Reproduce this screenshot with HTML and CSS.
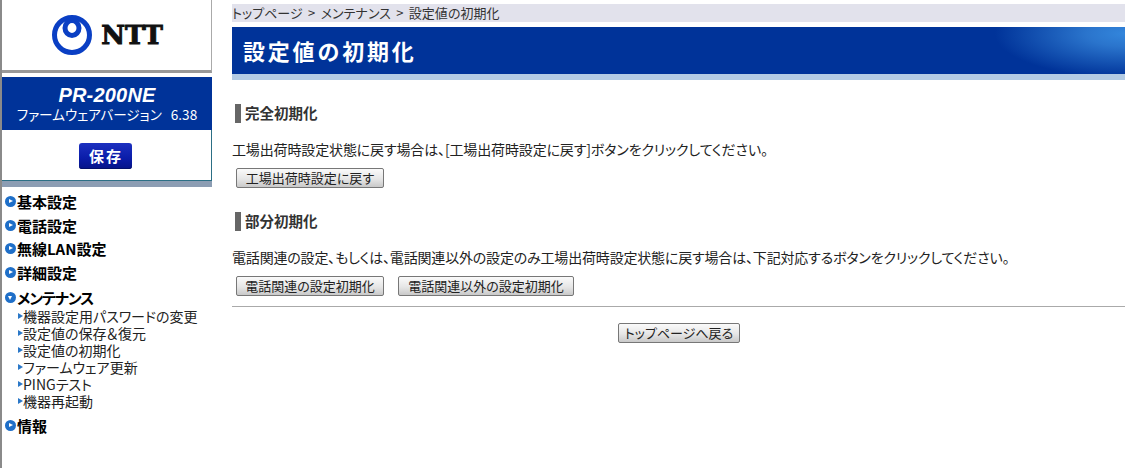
FILE: index.html
```html
<!DOCTYPE html>
<html lang="ja">
<head>
<meta charset="utf-8">
<title>設定値の初期化</title>
<link rel="stylesheet" href="styles.css">
</head>
<body>
<aside class="side">
  <div class="logo-box">
    <svg class="ntt-mark" width="42" height="40" viewBox="0 0 42 40"><circle cx="21" cy="20" r="17.500" fill="none" stroke="#0a3fc4" stroke-width="5"/><ellipse cx="21" cy="13" rx="7" ry="7.500" fill="none" stroke="#0a3fc4" stroke-width="5"/><path d="M16 4.800Q21 3.500 26 4.800" fill="none" stroke="#0a3fc4" stroke-width="3"/></svg>
    <span class="ntt-word">NTT</span>
  </div>
  <div class="device">
    <div class="device-name">PR-200NE</div>
    <div class="device-fw"><span>ファームウェアバージョン</span><span>6.38</span></div>
  </div>
  <div class="save-box"><button class="save" type="button">保存</button></div>
  <div class="save-band"></div>
  <nav class="nav">
    <a class="nav-top"><i class="dot"></i>基本設定</a>
    <a class="nav-top"><i class="dot"></i>電話設定</a>
    <a class="nav-top"><i class="dot"></i>無線LAN設定</a>
    <a class="nav-top"><i class="dot"></i>詳細設定</a>
    <a class="nav-top open"><i class="dot down"></i>メンテナンス</a>
    <ul class="sub">
      <li>機器設定用パスワードの変更</li>
      <li>設定値の保存＆復元</li>
      <li>設定値の初期化</li>
      <li>ファームウェア更新</li>
      <li>PINGテスト</li>
      <li>機器再起動</li>
    </ul>
    <a class="nav-top last"><i class="dot"></i>情報</a>
  </nav>
</aside>
<main class="main">
  <div class="crumb">トップページ &gt; メンテナンス &gt; 設定値の初期化</div>
  <h1 class="title">設定値の初期化</h1>
  <h2 class="sec first">完全初期化</h2>
  <p class="desc">工場出荷時設定状態に戻す場合は、[工場出荷時設定に戻す]ボタンをクリックしてください。</p>
  <div class="btns"><button class="btn b1" type="button">工場出荷時設定に戻す</button></div>
  <h2 class="sec second">部分初期化</h2>
  <p class="desc tight">電話関連の設定、もしくは、電話関連以外の設定のみ工場出荷時設定状態に戻す場合は、下記対応するボタンをクリックしてください。</p>
  <div class="btns"><button class="btn b1" type="button">電話関連の設定初期化</button><button class="btn b2" type="button">電話関連以外の設定初期化</button></div>
  <hr class="rule">
  <div class="back"><button class="btn b3" type="button">トップページへ戻る</button></div>
</main>
</body>
</html>
```
FILE: styles.css
```css
* { box-sizing: border-box; }
html, body { margin: 0; height: 100%; }
body {
  display: flex;
  background: #fff;
  color: #111;
  font-family: "Noto Sans CJK JP", "Liberation Sans", sans-serif;
  font-size: 13px;
  font-feature-settings: "palt";
  overflow: hidden;
}
.side {
  width: 212px;
  flex: none;
  border-left: 2px solid #8a8a8a;
  min-height: 468px;
}
.logo-box {
  height: 73px;
  border-right: 1px solid #aaa;
  border-bottom: 3px solid #999;
  display: flex;
  align-items: center;
  justify-content: center;
  gap: 8px;
  padding-left: 1px;
  margin-bottom: 4px;
}
.ntt-word {
  font-family: "DejaVu Serif", serif;
  font-weight: 700;
  font-size: 26px;
  color: #111;
  line-height: 1;
  font-feature-settings: normal;
  -webkit-text-stroke: 1px #111;
}
.device {
  height: 53px;
  background: #003399;
  color: #fff;
  text-align: center;
  padding-top: 7px;
}
.device-name {
  font-family: "Liberation Sans", sans-serif;
  font-style: italic;
  font-weight: 700;
  font-size: 20px;
  line-height: 22px;
  letter-spacing: 0.200px;
}
.device-fw {
  display: flex;
  justify-content: center;
  gap: 9px;
  font-size: 13.600px;
  line-height: 17px;
  font-weight: 400;
}
.save-box {
  height: 51px;
  border-right: 1px solid #2c6f85;
  border-bottom: 1px solid #2c6f85;
  display: flex;
  align-items: center;
  justify-content: center;
  padding-top: 1px;
  padding-right: 2px;
}
.save {
  width: 53px;
  height: 26px;
  border: 0;
  border-radius: 3px;
  padding: 0 0 0 1px;
  background: linear-gradient(#1c30c0, #0a1ca8 60%, #061488);
  box-shadow: inset 0 -1px 0 #04106a;
  color: #fff;
  font: 700 15px "Noto Sans CJK JP", sans-serif;
  letter-spacing: 2px;
}
.save-band { height: 6px; background: #8c9db3; }
.nav { padding: 3px 0 0 3px; }
.nav-top {
  display: flex;
  align-items: center;
  height: 23.500px;
  font-weight: 700;
  font-size: 15px;
  color: #000;
}
.nav-top.open { margin-top: 1.500px; letter-spacing: -1px; }
.dot {
  width: 11px;
  height: 11px;
  margin-right: 1px;
  border-radius: 50%;
  background: #1f6fc8;
  position: relative;
  flex: none;
}
.dot::after {
  content: "";
  position: absolute;
  left: 4px;
  top: 3px;
  border-left: 4px solid #fff;
  border-top: 2.500px solid transparent;
  border-bottom: 2.500px solid transparent;
}
.dot.down::after {
  left: 3px;
  top: 4px;
  border-top: 4px solid #fff;
  border-left: 2.500px solid transparent;
  border-right: 2.500px solid transparent;
  border-bottom: 0;
}
.sub { list-style: none; margin: -1.500px 0 3px; padding: 0 0 0 13px; }
.sub li {
  height: 17.200px;
  line-height: 17px;
  font-size: 14px;
  padding-left: 5px;
  position: relative;
  color: #222;
  white-space: nowrap;
}
.sub li::before {
  content: "";
  position: absolute;
  left: 0;
  top: 5px;
  border-left: 5px solid #2b78c8;
  border-top: 3px solid transparent;
  border-bottom: 3px solid transparent;
}
.main { width: 893px; margin-left: 20px; padding-top: 4px; flex: none; }
.crumb {
  height: 18px;
  line-height: 18px;
  background: #e2e2ec;
  font-size: 13px;
  word-spacing: 2.500px;
  color: #333;
  white-space: pre;
}
.title {
  margin: 5px 0 0;
  height: 53px;
  padding: 0 0 6px 11px;
  line-height: 47px;
  color: #fff;
  font-size: 22px;
  font-weight: 700;
  letter-spacing: 2.800px;
  font-feature-settings: normal;
  border-bottom: 6px solid #b3cbe4;
  background: radial-gradient(ellipse 130px 44px at 100% 14%, #3386dc 0%, #2a74cc 30%, #003399 100%) #003399;
}
.sec {
  margin: 0 0 0 3px;
  height: 20px;
  line-height: 20px;
  font-size: 14.500px;
  font-weight: 700;
  color: #333;
  padding-left: 10px;
  position: relative;
}
.sec::before {
  content: "";
  position: absolute;
  left: 0;
  top: 1px;
  width: 6px;
  height: 19px;
  background: #666;
}
.sec.first { margin-top: 23px; }
.sec.second { margin-top: 23px; }
.desc {
  margin: 16px 0 0;
  height: 20px;
  line-height: 20px;
  color: #222;
  font-size: 14px;
  letter-spacing: -0.140px;
  white-space: nowrap;
}
.desc.tight { letter-spacing: -0.180px; }
.btns { display: flex; gap: 14px; margin: 9px 0 0 4px; }
.btn {
  height: 20px;
  padding: 0;
  border: 1px solid #777;
  border-radius: 2px;
  background: linear-gradient(#fafafa, #e6e6e6 55%, #c9c9c9);
  font: 400 13px/16px "Noto Sans CJK JP", sans-serif;
  font-feature-settings: "palt";
  color: #222;
}
.b1 { width: 148px; }
.b2 { width: 176px; }
.b3 { width: 122px; }
.rule { margin: 10px 0 0; border: 0; border-top: 1px solid #aaa; }
.back { display: flex; justify-content: center; margin-top: 16px; padding-left: 1px; }
```
